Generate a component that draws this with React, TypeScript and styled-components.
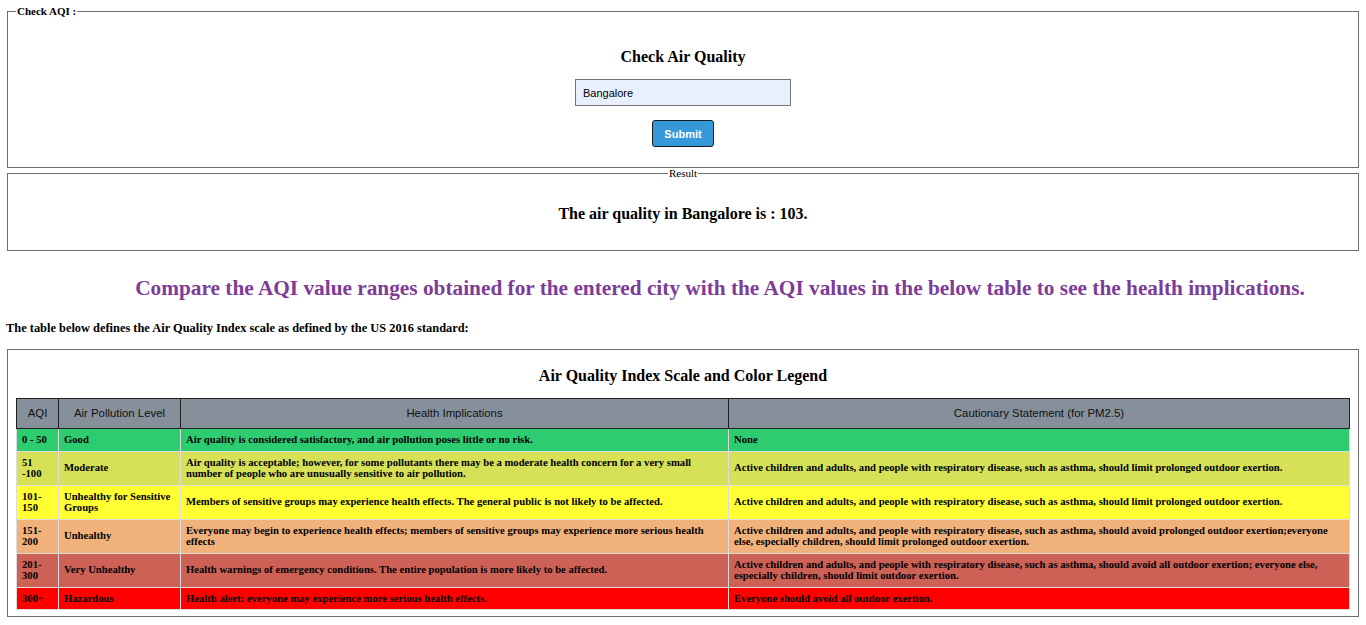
import React from "react";
import styled, { createGlobalStyle } from "styled-components";

const GlobalStyle = createGlobalStyle`
  html, body { margin: 0; padding: 0; background: #ffffff; }
  body {
    padding: 5px 6px 0 6px;
    font-family: "Liberation Serif", "Times New Roman", serif;
    color: #000;
  }
`;

const Fieldset = styled.fieldset<{ $top?: number }>`
  margin: ${(p) => p.$top ?? 0}px 1px 0 1px;
  padding: 0 8px;
  border: 1px solid #6e6e6e;
  min-inline-size: auto;
  display: block;
`;

const Legend = styled.legend<{ $center?: boolean; $bold?: boolean; $lh: number }>`
  padding: 0 1px;
  margin: ${(p) => (p.$center ? "0 auto" : "0")};
  font-size: 11px;
  line-height: ${(p) => p.$lh}px;
  font-weight: ${(p) => (p.$bold ? 700 : 400)};
`;

const FormBody = styled.div`
  display: flex;
  flex-direction: column;
  align-items: center;
  padding: 30px 0 20px;
`;

const Title = styled.h3`
  margin: 0;
  font-size: 16px;
  line-height: 20px;
  font-weight: 700;
  text-align: center;
`;

const CityInput = styled.input`
  margin-top: 12px;
  box-sizing: border-box;
  width: 216px;
  height: 27px;
  padding: 0 7px;
  border: 1px solid #767676;
  background: #e8f0fe;
  font-family: "Liberation Sans", Arial, sans-serif;
  font-size: 11px;
  color: #000;
  outline: none;
`;

const SubmitButton = styled.button`
  margin-top: 14px;
  box-sizing: border-box;
  width: 62px;
  height: 27px;
  background: #3498db;
  border: 1px solid #1c1c1c;
  border-radius: 3px;
  color: #fff;
  font-family: "Liberation Sans", Arial, sans-serif;
  font-size: 11px;
  font-weight: 700;
  cursor: pointer;
`;

const ResultText = styled.h3`
  margin: 0;
  padding: 26px 0 26px;
  font-size: 16px;
  line-height: 20px;
  font-weight: 700;
  text-align: center;
`;

const Compare = styled.h2`
  margin: 24px 0 0;
  padding-left: 74px;
  font-size: 21.3px;
  line-height: 26px;
  font-weight: 700;
  color: #7d3c98;
  text-align: center;
  white-space: nowrap;
`;

const Note = styled.p`
  margin: 20px 0 0;
  font-size: 12.4px;
  line-height: 14px;
  font-weight: 700;
`;

const TableTitle = styled.h3`
  margin: 0;
  padding-top: 16px;
  font-size: 16px;
  line-height: 20px;
  font-weight: 700;
  text-align: center;
`;

const Table = styled.table`
  margin: 12px 0 6px;
  width: 100%;
  border-collapse: collapse;
  table-layout: fixed;
`;

const Th = styled.th<{ $w?: number }>`
  width: ${(p) => (p.$w ? `${p.$w}px` : "auto")};
  background: #86909b;
  border: 1px solid #222;
  padding: 8px 5px;
  font-family: "Liberation Sans", Arial, sans-serif;
  font-size: 11.4px;
  line-height: 13px;
  font-weight: 400;
  color: #111;
  text-align: center;
`;

const Tr = styled.tr<{ $bg: string }>`
  background: ${(p) => p.$bg};
`;

const Td = styled.td`
  border: 1px solid #dcdcdc;
  padding: 5px 5px;
  font-size: 10.65px;
  line-height: 11.5px;
  font-weight: 700;
  vertical-align: middle;
  text-align: left;
`;

const rows = [
  {
    bg: "#2ecc71",
    aqi: "0 - 50",
    level: "Good",
    health: "Air quality is considered satisfactory, and air pollution poses little or no risk.",
    caution: "None",
  },
  {
    bg: "#d6e157",
    aqi: "51 -100",
    level: "Moderate",
    health:
      "Air quality is acceptable; however, for some pollutants there may be a moderate health concern for a very small number of people who are unusually sensitive to air pollution.",
    caution:
      "Active children and adults, and people with respiratory disease, such as asthma, should limit prolonged outdoor exertion.",
  },
  {
    bg: "#ffff33",
    aqi: "101-150",
    level: "Unhealthy for Sensitive Groups",
    health: "Members of sensitive groups may experience health effects. The general public is not likely to be affected.",
    caution:
      "Active children and adults, and people with respiratory disease, such as asthma, should limit prolonged outdoor exertion.",
  },
  {
    bg: "#f0b27a",
    aqi: "151-200",
    level: "Unhealthy",
    health:
      "Everyone may begin to experience health effects; members of sensitive groups may experience more serious health effects",
    caution:
      "Active children and adults, and people with respiratory disease, such as asthma, should avoid prolonged outdoor exertion;everyone else, especially children, should limit prolonged outdoor exertion.",
  },
  {
    bg: "#cd6155",
    aqi: "201-300",
    level: "Very Unhealthy",
    health: "Health warnings of emergency conditions. The entire population is more likely to be affected.",
    caution:
      "Active children and adults, and people with respiratory disease, such as asthma, should avoid all outdoor exertion; everyone else, especially children, should limit outdoor exertion.",
  },
  {
    bg: "#ff0000",
    aqi: "300+",
    level: "Hazardous",
    health: "Health alert: everyone may experience more serious health effects.",
    caution: "Everyone should avoid all outdoor exertion.",
  },
];

export default function App() {
  return (
    <>
      <GlobalStyle />
      <Fieldset>
        <Legend $bold $lh={12}>Check AQI :</Legend>
        <FormBody>
          <Title>Check Air Quality</Title>
          <CityInput defaultValue="Bangalore" />
          <SubmitButton>Submit</SubmitButton>
        </FormBody>
      </Fieldset>
      <Fieldset>
        <Legend $center $lh={10}>Result</Legend>
        <ResultText>The air quality in Bangalore is : 103.</ResultText>
      </Fieldset>
      <Compare>
        Compare the AQI value ranges obtained for the entered city with the AQI values in the below table to see the
        health implications.
      </Compare>
      <Note>The table below defines the Air Quality Index scale as defined by the US 2016 standard:</Note>
      <Fieldset $top={14}>
        <TableTitle>Air Quality Index Scale and Color Legend</TableTitle>
        <Table>
          <thead>
            <tr>
              <Th $w={31}>AQI</Th>
              <Th $w={111}>Air Pollution Level</Th>
              <Th $w={537}>Health Implications</Th>
              <Th>Cautionary Statement (for PM2.5)</Th>
            </tr>
          </thead>
          <tbody>
            {rows.map((r) => (
              <Tr key={r.aqi} $bg={r.bg}>
                <Td>{r.aqi}</Td>
                <Td>{r.level}</Td>
                <Td>{r.health}</Td>
                <Td>{r.caution}</Td>
              </Tr>
            ))}
          </tbody>
        </Table>
      </Fieldset>
    </>
  );
}
